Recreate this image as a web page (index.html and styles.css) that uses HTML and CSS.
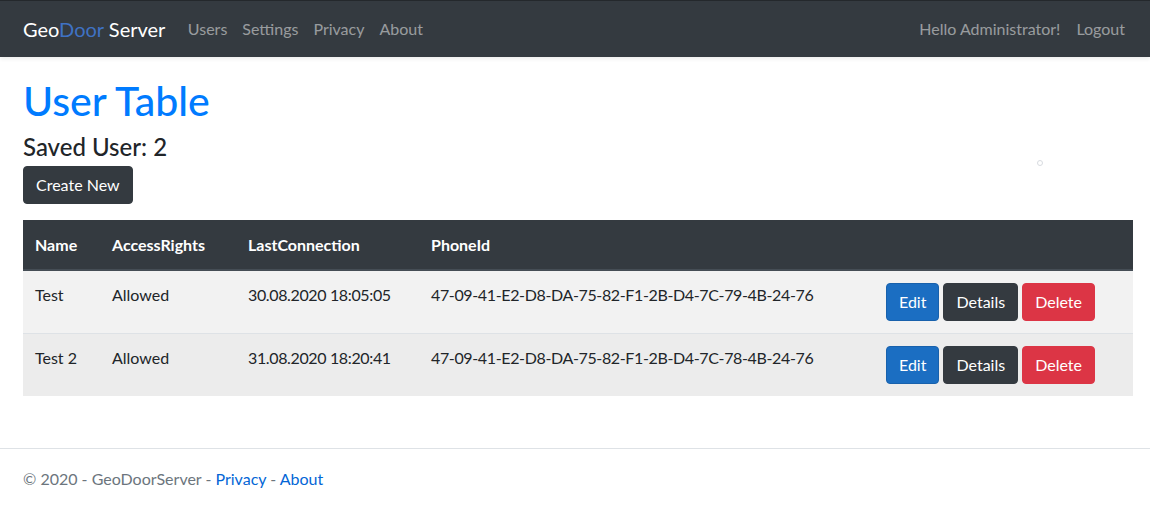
FILE: index.html
```html
<!DOCTYPE html>
<html lang="en">
<head>
<meta charset="utf-8">
<title>User Table - GeoDoorServer</title>
<link rel="stylesheet" href="styles.css">
</head>
<body>
<header class="navbar">
  <a class="brand" href="#">Geo<span class="brand-accent">Door</span> Server</a>
  <nav class="nav-left">
    <a class="nav-link" href="#">Users</a>
    <a class="nav-link" href="#">Settings</a>
    <a class="nav-link" href="#">Privacy</a>
    <a class="nav-link" href="#">About</a>
  </nav>
  <nav class="nav-right">
    <span class="nav-link">Hello Administrator!</span>
    <a class="nav-link" href="#">Logout</a>
  </nav>
</header>
<main class="main">
  <span class="spinner-dot"></span>
  <h1 class="title">User Table</h1>
  <h4 class="subtitle">Saved User: 2</h4>
  <p class="actions"><a class="btn btn-dark" href="#">Create New</a></p>
  <table class="table">
    <thead>
      <tr>
        <th class="col-name">Name</th>
        <th class="col-rights">AccessRights</th>
        <th class="col-last">LastConnection</th>
        <th class="col-phone">PhoneId</th>
        <th class="col-btns"></th>
      </tr>
    </thead>
    <tbody>
      <tr class="row-odd">
        <td>Test</td>
        <td>Allowed</td>
        <td class="cell-num">30.08.2020 18:05:05</td>
        <td class="cell-num">47-09-41-E2-D8-DA-75-82-F1-2B-D4-7C-79-4B-24-76</td>
        <td><div class="btn-group"><a class="btn btn-primary" href="#">Edit</a><a class="btn btn-dark" href="#">Details</a><a class="btn btn-danger" href="#">Delete</a></div></td>
      </tr>
      <tr class="row-even">
        <td>Test 2</td>
        <td>Allowed</td>
        <td class="cell-num">31.08.2020 18:20:41</td>
        <td class="cell-num">47-09-41-E2-D8-DA-75-82-F1-2B-D4-7C-78-4B-24-76</td>
        <td><div class="btn-group"><a class="btn btn-primary" href="#">Edit</a><a class="btn btn-dark" href="#">Details</a><a class="btn btn-danger" href="#">Delete</a></div></td>
      </tr>
    </tbody>
  </table>
</main>
<footer class="footer">
  <div class="footer-inner">&copy; 2020 - GeoDoorServer - <a href="#">Privacy</a> - <a href="#">About</a></div>
</footer>
</body>
</html>
```
FILE: styles.css
```css
* { box-sizing: border-box; }
html, body { margin: 0; padding: 0; }
body {
  font-family: "Lato", "Open Sans", sans-serif;
  font-size: 16px;
  line-height: 1.5;
  color: #212529;
  background: #fff;
  min-height: 100vh;
  display: flex;
  flex-direction: column;
}
a { text-decoration: none; }

.navbar {
  display: flex;
  align-items: center;
  background: #343a40;
  border-top: 1px solid #24282c;
  height: 57px;
  padding: 0 17px 0 23px;
  box-shadow: 0 2px 4px rgba(0,0,0,.08);
  margin-bottom: 16px;
}
.brand {
  color: #fff;
  font-size: 20px;
  line-height: 30px;
  margin-right: 15px;
}
.brand-accent { color: #3f72c4; }
.nav-left { display: flex; flex: 1; }
.nav-right { display: flex; }
.nav-link {
  color: rgba(255,255,255,.5);
  padding: 8px 7.5px;
  line-height: 24px;
}
.nav-right .nav-link { padding: 8px 8px; }

.main {
  position: relative;
  padding: 0 17px 0 23px;
}
.spinner-dot {
  position: absolute;
  left: 1037px;
  top: 87px;
  width: 6px;
  height: 6px;
  border: 1.5px solid #d8dbe0;
  border-radius: 50%;
}
.title {
  margin: 3px 0 8px;
  font-size: 41px;
  font-weight: 500;
  line-height: 1.2;
  color: #007bff;
}
.subtitle {
  margin: 0 0 4px;
  font-size: 24px;
  font-weight: 500;
  line-height: 1.2;
}
.actions { margin: 0 0 16px; }

.btn {
  display: inline-block;
  padding: 6px 12px;
  font-size: 16px;
  line-height: 24px;
  border: 1px solid transparent;
  border-radius: 4px;
  color: #fff;
}
.btn-dark { background: #343a40; border-color: #343a40; }
.btn-primary { background: #1b6ec2; border-color: #1861ac; }
.btn-danger { background: #dc3545; border-color: #dc3545; }
.btn-group { display: flex; gap: 4px; }

.table {
  width: 100%;
  border-collapse: collapse;
  margin-bottom: 16px;
}
.table th, .table td {
  padding: 12px;
  text-align: left;
  vertical-align: top;
  border-top: 1px solid #dee2e6;
}
.table thead th {
  background: #343a40;
  color: #fff;
  font-weight: 700;
  border-color: #454d55;
  border-top-color: #343a40;
  border-bottom: 2px solid #454d55;
}
.cell-num { letter-spacing: -0.36px; }
.col-name { width: 77px; }
.col-rights { width: 136px; }
.col-last { width: 183px; }
.col-phone { width: 455px; }
.row-odd td { background: #f2f2f2; }
.row-even td { background: #ececec; }

.footer {
  margin-top: auto;
  border-top: 1px solid #dee2e6;
  color: #6c757d;
  line-height: 59px;
  padding: 0 23px;
}
.footer a { color: #0366d6; }
```
